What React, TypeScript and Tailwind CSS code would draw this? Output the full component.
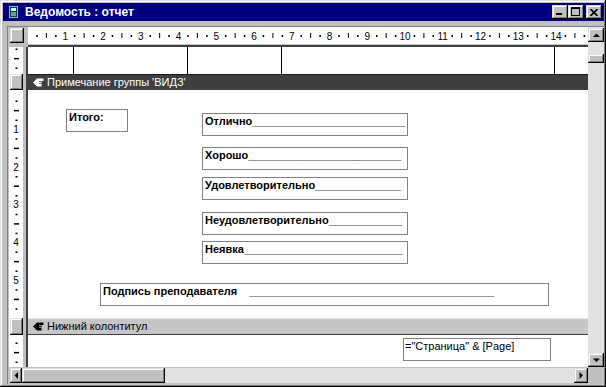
const raised =
  "bg-[#c0c0c0] shadow-[inset_-1px_-1px_#000000,inset_1px_1px_#dfdfdf,inset_-2px_-2px_#808080,inset_2px_2px_#ffffff]";

function Arrow({ dir }: { dir: "up" | "down" | "left" | "right" }) {
  const pts = {
    up: "0,4 7,4 3.5,0.5",
    down: "0,0.5 7,0.5 3.5,4",
    left: "4,0 4,7 0.5,3.5",
    right: "0.5,0 0.5,7 4,3.5",
  }[dir];
  const vertical = dir === "up" || dir === "down";
  return (
    <svg width={vertical ? 7 : 5} height={vertical ? 5 : 7} viewBox={vertical ? "0 0 7 5" : "0 0 5 7"}>
      <polygon points={pts} fill="#000000" />
    </svg>
  );
}

function SectionIcon({ color }: { color: string }) {
  return (
    <svg width="11" height="9" viewBox="0 0 11 9">
      <path d="M0 4.5 L4 0.5 H10.5 V3 H8.5 V8.5 H4 Z" fill={color} />
      <path d="M6 3.5 H8 M6 5.5 H8" stroke={color === "#ffffff" ? "#3f3f3f" : "#c0c0c0"} strokeWidth="0.8" />
    </svg>
  );
}

function HRuler() {
  const step = 37.75;
  const items = [];
  for (let n = 0; n < 15; n++) {
    const x0 = -0.5 + n * step;
    items.push(<rect key={`a${n}`} x={x0 + 8.7} y={8} width={1.5} height={2} />);
    items.push(<rect key={`b${n}`} x={x0 + 18.4} y={6} width={1} height={5} />);
    items.push(<rect key={`c${n}`} x={x0 + 27.6} y={8} width={1.5} height={2} />);
    if (n > 0)
      items.push(
        <text key={`t${n}`} x={x0} y={12.5} textAnchor="middle" fontSize="10" fontFamily="Liberation Sans, Arial, sans-serif">
          {n}
        </text>
      );
  }
  return (
    <svg width="560" height="17" className="block">
      <g fill="#000000">{items}</g>
    </svg>
  );
}

function VRuler({ height, origin, count, numbers }: { height: number; origin: number; count: number; numbers: boolean }) {
  const step = 37.75;
  const items = [];
  for (let k = 0; k < count; k++) {
    const y0 = origin + k * step;
    items.push(<rect key={`a${k}`} x={6.5} y={y0 + 9} width={2} height={1.5} />);
    items.push(<rect key={`b${k}`} x={5} y={y0 + 18.4} width={5} height={1.5} />);
    items.push(<rect key={`c${k}`} x={6.5} y={y0 + 28} width={2} height={1.5} />);
    if (numbers && k > 0)
      items.push(
        <text key={`t${k}`} x={7} y={y0 + 3.5} textAnchor="middle" fontSize="10" fontFamily="Liberation Sans, Arial, sans-serif">
          {k}
        </text>
      );
  }
  return (
    <svg width="14" height={height} className="block">
      <g fill="#000000">{items}</g>
    </svg>
  );
}

function Field({ className, label, line, gap = "" }: { className: string; label: string; line: number; gap?: string }) {
  return (
    <div className={`absolute border border-[#808080] bg-white h-[23px] pl-[2px] pt-[1px] ${className}`}>
      <div className="whitespace-pre text-[11px] leading-[13px] font-bold text-black">
        {label}
        {gap}
        {"_".repeat(line)}
      </div>
    </div>
  );
}

export default function App() {
  return (
    <div className="w-[606px] h-[387px] overflow-hidden bg-[#c0c0c0] pl-[3px] pr-[2px] pt-[3px] font-['Liberation_Sans',Arial,sans-serif] shadow-[inset_-1px_-1px_#000000,inset_1px_1px_#dfdfdf,inset_-2px_-2px_#808080,inset_2px_2px_#ffffff]">
      {/* title bar */}
      <div className="h-[18px] bg-[#000080] flex items-center pl-[6px] pr-[2px]">
        <svg width="12" height="12" viewBox="0 0 12 12">
          <rect x="0.5" y="0.5" width="8" height="11" fill="#004040" stroke="#80c0c0" strokeWidth="1" />
          <rect x="2" y="2" width="5" height="3" fill="#c0ffff" />
          <path d="M2 7 H7 M2 9 H7" stroke="#c0ffff" strokeWidth="1" />
        </svg>
        <span className="ml-[4px] text-[12px] leading-[16px] font-bold text-white">Ведомость : отчет</span>
        <div className="ml-auto flex items-center">
          <div className={`w-[16px] h-[14px] ${raised} relative`}>
            <div className="absolute left-[4px] top-[8px] w-[6px] h-[2px] bg-black" />
          </div>
          <div className={`w-[16px] h-[14px] ${raised} relative`}>
            <div className="absolute left-[3px] top-[2px] w-[9px] h-[9px] border border-black border-t-2" />
          </div>
          <div className={`ml-[2px] w-[16px] h-[14px] ${raised} flex items-center justify-center`}>
            <svg width="8" height="7" viewBox="0 0 8 7">
              <path d="M0.5 0 L7.5 7 M7.5 0 L0.5 7" stroke="#000000" strokeWidth="1.6" />
            </svg>
          </div>
        </div>
      </div>

      {/* body */}
      <div className="mt-[5px] ml-[4px] w-[597px] border-l border-t border-[#808080] grid grid-cols-[20px_560px_16px] grid-rows-[20px_320px_17px]">
        {/* corner box */}
        <div className="col-start-1 row-start-1 pl-[2px] pt-[1px]">
          <div className={`w-[14px] h-[15px] ${raised}`} />
        </div>

        {/* horizontal ruler */}
        <div className="col-start-2 row-start-1 flex flex-col">
          <div className="h-[17px] bg-white">
            <HRuler />
          </div>
          <div className="h-[1px] bg-[#c0c0c0]" />
          <div className="h-[2px] bg-[#404040]" />
        </div>

        {/* vertical scrollbar */}
        <div className="col-start-3 row-start-1 row-span-2 flex flex-col bg-[#e2e2e2]">
          <div className={`mt-[1px] h-[14px] ${raised} flex items-center justify-center`}>
            <Arrow dir="up" />
          </div>
          <div className="flex-1 pt-[12px]">
            <div className={`h-[9px] ${raised}`} />
          </div>
          <div className={`h-[14px] ${raised} flex items-center justify-center`}>
            <Arrow dir="down" />
          </div>
        </div>

        {/* vertical ruler */}
        <div className="col-start-1 row-start-2 flex">
          <div className="w-[1px]" />
          <div className="w-[14px] bg-white flex flex-col">
            <div className="h-[27px]">
              <VRuler height={27} origin={-7.5} count={1} numbers={false} />
            </div>
            <div className={`ml-[1px] w-[13px] h-[16px] ${raised}`} />
            <div className="h-[228px]">
              <VRuler height={228} origin={1.5} count={6} numbers />
            </div>
            <div className={`ml-[1px] w-[13px] h-[17px] ${raised}`} />
            <div className="h-[32px]">
              <VRuler height={32} origin={-1.5} count={1} numbers={false} />
            </div>
          </div>
          <div className="w-[3px]" />
          <div className="w-[2px] bg-[#404040]" />
        </div>

        {/* design surface */}
        <div className="col-start-2 row-start-2 flex flex-col bg-white text-black">
          <div className="h-[27px] flex">
            <div className="w-[46px] border-r border-black" />
            <div className="w-[114px] border-r border-black" />
            <div className="w-[94px] border-r border-black" />
            <div className="w-[273px] border-r border-black" />
            <div className="flex-1" />
          </div>
          <div className="h-[16px] bg-[#3f3f3f] border-t border-[#1a1a1a] flex items-center pl-[5px] gap-[3px] text-white text-[11px]">
            <SectionIcon color="#ffffff" />
            <span>Примечание группы 'ВИДЗ'</span>
          </div>
          <div className="h-[228px] relative">
            <Field className="left-[38px] top-[19px] w-[62px]" label="Итого:" line={0} />
            <Field className="left-[174px] top-[23px] w-[206px]" label="Отлично" line={25} />
            <Field className="left-[174px] top-[57px] w-[206px]" label="Хорошо" line={25} />
            <Field className="left-[174px] top-[87px] w-[206px]" label="Удовлетворительно" line={14} />
            <Field className="left-[174px] top-[122px] w-[206px]" label="Неудовлетворительно" line={12} />
            <Field className="left-[174px] top-[151px] w-[206px]" label="Неявка" line={26} />
            <Field className="left-[72px] top-[193px] w-[449px]" label="Подпись преподавателя" gap="    " line={40} />
          </div>
          <div className="h-[17px] bg-[#c6c6c6] border-t border-[#e4e4e4] border-b border-b-[#404040] flex items-center pl-[5px] gap-[3px] text-black text-[11px]">
            <SectionIcon color="#000000" />
            <span>Нижний колонтитул</span>
          </div>
          <div className="h-[32px] relative">
            <div className="absolute left-[375px] top-[3px] w-[148px] h-[23px] border border-[#808080] pl-[1px] pt-[1px] text-[11px] leading-[13px] whitespace-nowrap">
              ="Страница" &amp; [Page]
            </div>
          </div>
        </div>

        {/* horizontal scrollbar */}
        <div className="col-start-1 col-span-2 row-start-3 flex pl-[2px] pt-[1px] pb-[1px]">
          <div className={`w-[12px] ${raised} flex items-center justify-center`}>
            <Arrow dir="left" />
          </div>
          <div className={`w-[143px] ${raised}`} />
          <div className="flex-1 bg-[#e2e2e2]" />
          <div className={`w-[14px] ${raised} flex items-center justify-center`}>
            <Arrow dir="right" />
          </div>
        </div>
        <div className="col-start-3 row-start-3 bg-[#c0c0c0]" />
      </div>
    </div>
  );
}
